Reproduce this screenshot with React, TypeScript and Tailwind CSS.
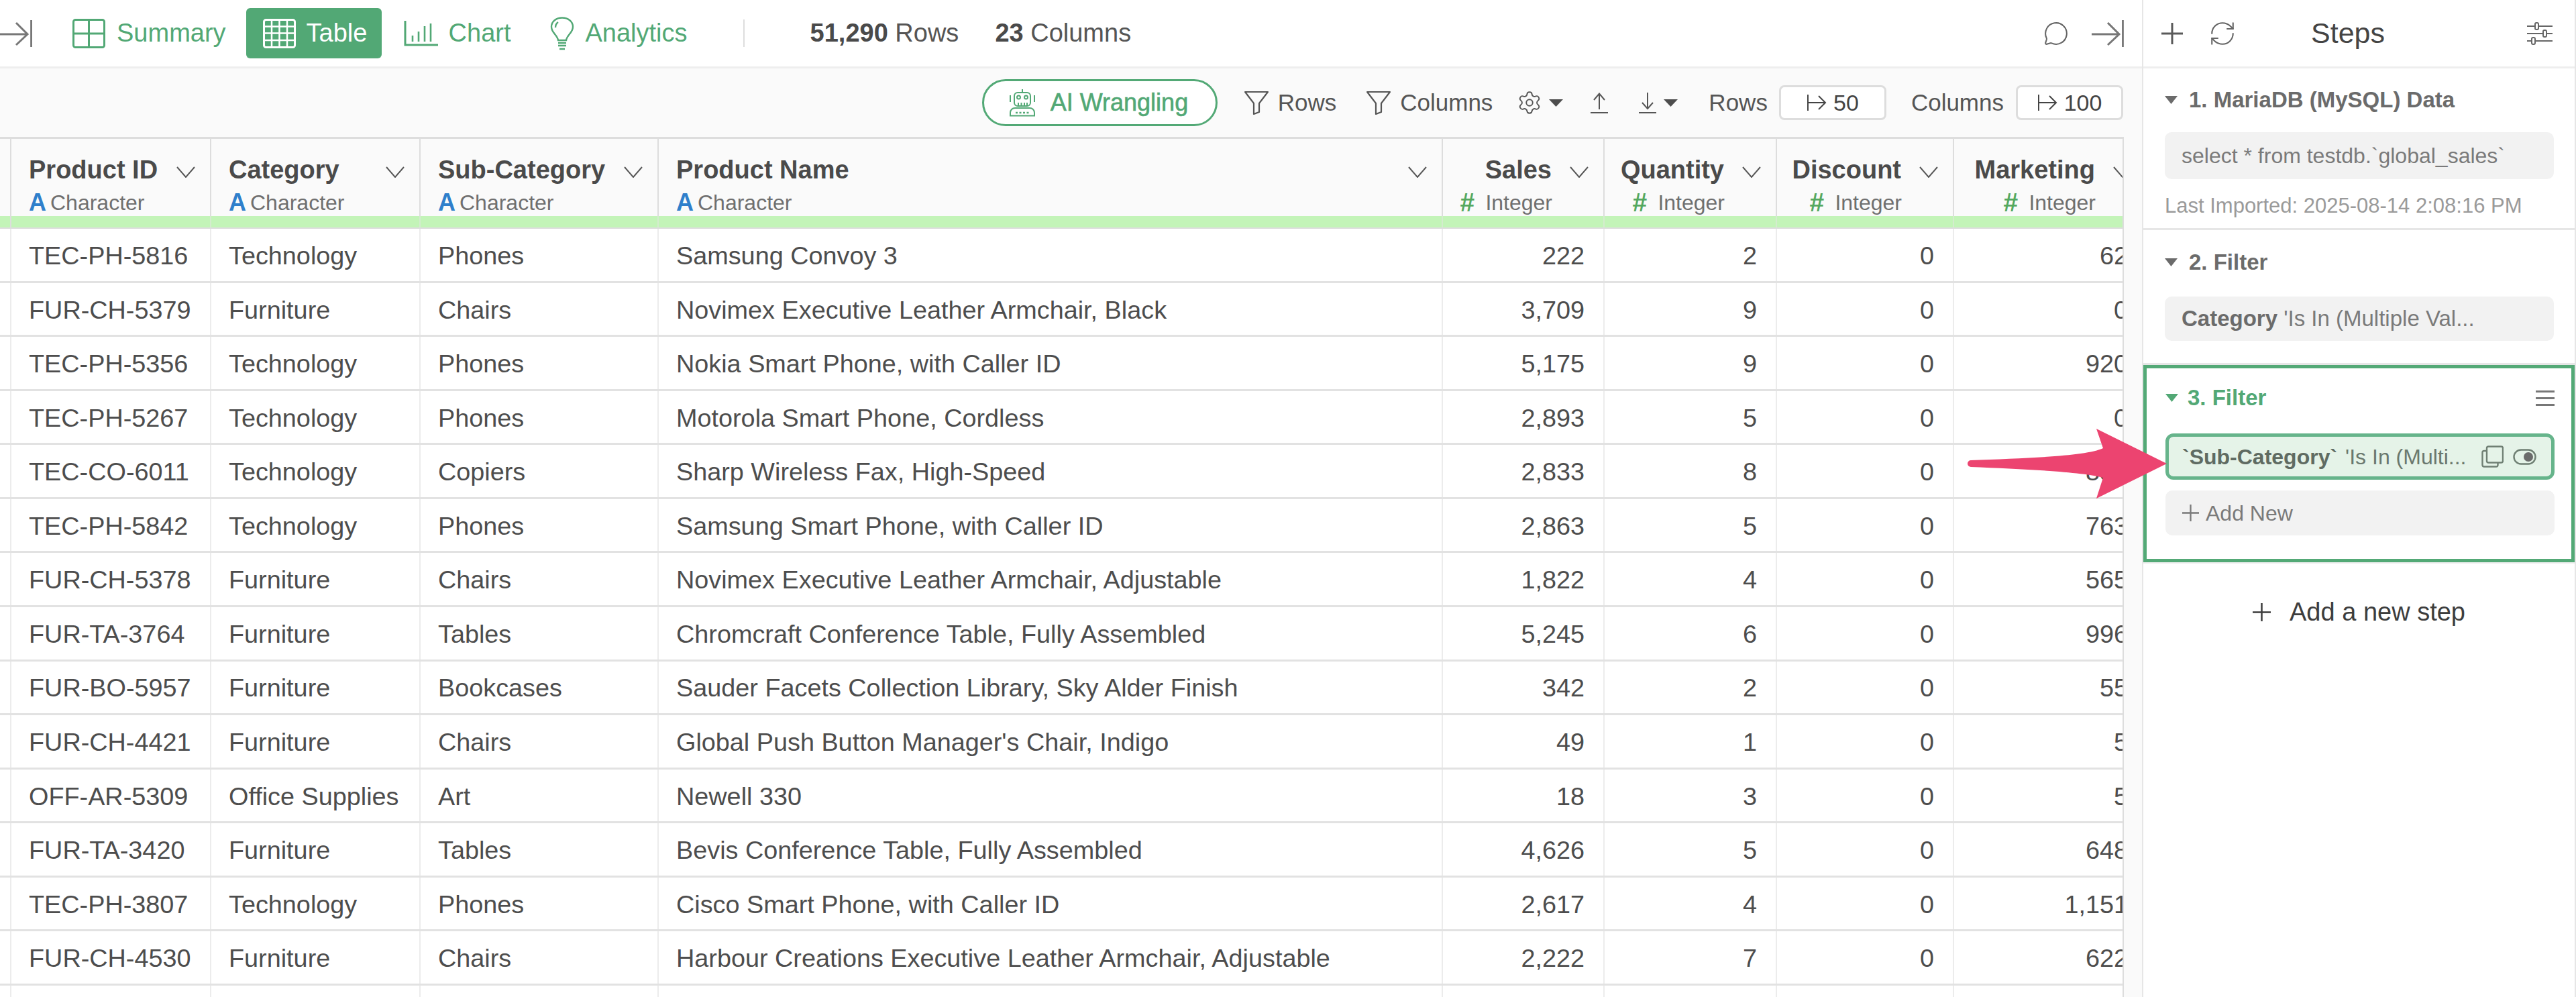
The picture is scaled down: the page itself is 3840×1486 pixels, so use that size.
import React from 'react';
import { MessageCircle, RefreshCw, Settings } from 'lucide-react';

const green = '#52a875';

const textCols = [
  { name: 'Product ID', width: 'w-[298px]' },
  { name: 'Category', width: 'w-[312px]' },
  { name: 'Sub-Category', width: 'w-[355px]' },
  { name: 'Product Name', width: 'w-[1169px]' },
];

const numCols = [
  { name: 'Sales', width: 'w-[241px]' },
  { name: 'Quantity', width: 'w-[257px]' },
  { name: 'Discount', width: 'w-[264px]' },
  { name: 'Marketing', width: 'w-[289px]' },
];

const rows = [
  ['TEC-PH-5816', 'Technology', 'Phones', 'Samsung Convoy 3', '222', '2', '0', '62'],
  ['FUR-CH-5379', 'Furniture', 'Chairs', 'Novimex Executive Leather Armchair, Black', '3,709', '9', '0', '0'],
  ['TEC-PH-5356', 'Technology', 'Phones', 'Nokia Smart Phone, with Caller ID', '5,175', '9', '0', '920'],
  ['TEC-PH-5267', 'Technology', 'Phones', 'Motorola Smart Phone, Cordless', '2,893', '5', '0', '0'],
  ['TEC-CO-6011', 'Technology', 'Copiers', 'Sharp Wireless Fax, High-Speed', '2,833', '8', '0', '850'],
  ['TEC-PH-5842', 'Technology', 'Phones', 'Samsung Smart Phone, with Caller ID', '2,863', '5', '0', '763'],
  ['FUR-CH-5378', 'Furniture', 'Chairs', 'Novimex Executive Leather Armchair, Adjustable', '1,822', '4', '0', '565'],
  ['FUR-TA-3764', 'Furniture', 'Tables', 'Chromcraft Conference Table, Fully Assembled', '5,245', '6', '0', '996'],
  ['FUR-BO-5957', 'Furniture', 'Bookcases', 'Sauder Facets Collection Library, Sky Alder Finish', '342', '2', '0', '55'],
  ['FUR-CH-4421', 'Furniture', 'Chairs', "Global Push Button Manager's Chair, Indigo", '49', '1', '0', '5'],
  ['OFF-AR-5309', 'Office Supplies', 'Art', 'Newell 330', '18', '3', '0', '5'],
  ['FUR-TA-3420', 'Furniture', 'Tables', 'Bevis Conference Table, Fully Assembled', '4,626', '5', '0', '648'],
  ['TEC-PH-3807', 'Technology', 'Phones', 'Cisco Smart Phone, with Caller ID', '2,617', '4', '0', '1,151'],
  ['FUR-CH-4530', 'Furniture', 'Chairs', 'Harbour Creations Executive Leather Armchair, Adjustable', '2,222', '7', '0', '622'],
  ['', '', '', '', '', '', '', ''],
];

const Chevron = () => (
  <svg width="28" height="17" viewBox="0 0 28 17" fill="none" stroke="#555555" strokeWidth="2" className="shrink-0 mt-[6px]">
    <path d="M1 1 L14 16 L27 1" />
  </svg>
);

const Caret = () => (
  <svg width="21" height="11" viewBox="0 0 21 11" fill="#4d4d4d" className="shrink-0">
    <path d="M0 0 H21 L10.5 11 Z" />
  </svg>
);

const StepCaret = ({ color = '#6b6b6b' }: { color?: string }) => (
  <svg width="19" height="12" viewBox="0 0 19 12" fill={color} className="shrink-0">
    <path d="M0 0 H19 L9.5 12 Z" />
  </svg>
);

const BarArrow = ({ className }: { className?: string }) => (
  <svg width="48" height="40" viewBox="0 0 48 40" fill="none" stroke="#777777" strokeWidth="3" className={className}>
    <path d="M0 21 H40 M24 4 L41 21 L24 37" />
    <path d="M46.5 0 V40" strokeWidth="2.5" stroke="#666666" />
  </svg>
);

const Funnel = () => (
  <svg width="36" height="36" viewBox="0 0 36 36" fill="none" stroke="#555555" strokeWidth="2.2" strokeLinejoin="round" className="shrink-0">
    <path d="M1 2 H35 L22 19 V32 L14 35 V19 Z" />
  </svg>
);

const Pipe = ({ className }: { className?: string }) => (
  <svg width="30" height="30" viewBox="0 0 30 30" fill="none" stroke="#444444" strokeWidth="2" className={className}>
    <path d="M2 3 V27 M2 15 H28 M18 5 L28 15 L18 25" />
  </svg>
);

const SummaryIcon = () => (
  <svg width="49" height="44" viewBox="0 0 49 44" fill="none" stroke={green} strokeWidth="3" className="shrink-0">
    <rect x="1.5" y="1.5" width="46" height="41" rx="3" />
    <path d="M24.5 1.5 V42.5 M1.5 22 H47.5" />
  </svg>
);

const TableIcon = () => (
  <svg width="49" height="44" viewBox="0 0 49 44" fill="none" stroke="#ffffff" strokeWidth="3" className="shrink-0">
    <rect x="1.5" y="1.5" width="46" height="41" rx="3" />
    <path d="M1.5 11.5 H47.5 M1.5 21.5 H47.5 M1.5 32 H47.5 M13 1.5 V42.5 M24.5 1.5 V42.5 M36 1.5 V42.5" strokeWidth="2.5" />
  </svg>
);

const ChartIcon = () => (
  <svg width="51" height="38" viewBox="0 0 51 38" fill="none" stroke={green} strokeWidth="2.6" className="shrink-0">
    <path d="M2 0 V36 H51" strokeWidth="3" />
    <path d="M13 22 V31 M22 16 V31 M31 8 V31 M40 4 V31" />
  </svg>
);

const BulbIcon = () => (
  <svg width="36" height="50" viewBox="0 0 36 50" fill="none" stroke={green} strokeWidth="2.4" className="shrink-0">
    <path d="M12 35 C11 27 2 24 2 15 C2 7 9 1.5 18 1.5 C27 1.5 34 7 34 15 C34 24 25 27 24 35 Z" />
    <path d="M12 8 C9 10 8 13 8 16" />
    <path d="M12 39 H24 M12 43 H24 M14 48 H22" />
  </svg>
);

const RobotIcon = () => (
  <svg width="38" height="41" viewBox="0 0 38 41" fill="none" stroke={green} strokeWidth="2" className="shrink-0">
    <path d="M19 0 V5" />
    <rect x="7" y="5" width="24" height="20" rx="5" />
    <circle cx="13.5" cy="12" r="2.5" />
    <circle cx="24.5" cy="12" r="2.5" />
    <path d="M13 20 V25 M17.5 20 V25 M22 20 V25 M26 20 V25 M1 9 V19 M37 9 V19" />
    <path d="M1 39.5 V35 C1 31 4 28 8 28 H30 C34 28 37 31 37 35 V39.5 Z" />
    <path d="M9 35 H29" strokeDasharray="3 2.5" strokeWidth="2.4" />
  </svg>
);

const UploadIcon = () => (
  <svg width="26" height="31" viewBox="0 0 26 31" fill="none" stroke="#555555" strokeWidth="2" className="shrink-0">
    <path d="M13 25 V1 M5 11 L13 1.5 L21 11 M0 30 H26" />
  </svg>
);

const DownloadIcon = () => (
  <svg width="26" height="31" viewBox="0 0 26 31" fill="none" stroke="#555555" strokeWidth="2" className="shrink-0">
    <path d="M13 0 V24 M5 15 L13 24 L21 15 M0 30 H26" />
  </svg>
);

const PlusIcon = ({ size, color = '#5a5a5a' }: { size: number; color?: string }) => (
  <svg width={size} height={size} viewBox="0 0 32 32" fill="none" stroke={color} strokeWidth="3" className="shrink-0">
    <path d="M16 0 V32 M0 16 H32" />
  </svg>
);

const SlidersIcon = () => (
  <svg width="38" height="34" viewBox="0 0 38 34" fill="#ffffff" stroke="#666666" strokeWidth="2" className="shrink-0 ml-auto">
    <path d="M0 6 H38 M0 17 H38 M0 28 H38" />
    <rect x="12" y="1" width="5" height="10" rx="2" />
    <rect x="24" y="12" width="5" height="10" rx="2" />
    <rect x="7" y="23" width="5" height="10" rx="2" />
  </svg>
);

const CopyIcon = () => (
  <svg width="33" height="33" viewBox="0 0 33 33" fill="none" stroke="#6f7f73" strokeWidth="2.4" className="shrink-0">
    <rect x="8" y="1.5" width="24" height="24" rx="2.5" />
    <path d="M8 8 H4 C2.5 8 1.5 9 1.5 10.5 V29 C1.5 30.5 2.5 31.5 4 31.5 H22 C23.5 31.5 24.5 30.5 24.5 29 V25.5" />
  </svg>
);

const ToggleIcon = () => (
  <svg width="35" height="24" viewBox="0 0 35 24" fill="none" stroke="#6f7f73" strokeWidth="2.4" className="shrink-0">
    <rect x="1.5" y="1.5" width="32" height="21" rx="10.5" />
    <circle cx="23" cy="12" r="7" fill="#6b6b6b" stroke="none" />
  </svg>
);

const TypeTag = ({ kind }: { kind: 'text' | 'num' }) =>
  kind === 'text' ? (
    <span className="flex items-center h-[40px]">
      <span className="font-bold text-[36px] text-[#2f7fcb] w-[32px]">A</span>
      <span className="text-[32px] text-[#6f6f6f]">Character</span>
    </span>
  ) : (
    <span className="flex items-center h-[40px]">
      <span className="font-bold text-[39px] text-[#55a85f] w-[38px]">#</span>
      <span className="text-[32px] text-[#6f6f6f]">Integer</span>
    </span>
  );

const Table = () => (
  <div className="flex-1 w-[3166px] overflow-hidden bg-white border-t-[3px] border-r-2 border-[#dddddd]">
    {/* header */}
    <div className="flex h-[115px] bg-[#fafafa]">
      <div className="w-[17px] shrink-0 border-r-2 border-[#dddddd]" />
      {textCols.map(c => (
        <div key={c.name} className={`${c.width} shrink-0 border-r-2 border-[#dddddd] pl-[26px] pr-[22px] pt-[24px]`}>
          <div className="flex items-center justify-between h-[44px]">
            <span className="font-bold text-[38px] text-[#4a4a4a] whitespace-nowrap">{c.name}</span>
            <Chevron />
          </div>
          <div className="mt-[7px]">
            <TypeTag kind="text" />
          </div>
        </div>
      ))}
      {numCols.map(c => (
        <div key={c.name} className={`${c.width} shrink-0 border-r-2 border-[#dddddd] pr-[22px] pt-[24px]`}>
          <div className="flex items-center justify-end gap-[27px] h-[44px]">
            <span className="font-bold text-[38px] text-[#4a4a4a] whitespace-nowrap">{c.name}</span>
            <Chevron />
          </div>
          <div className="flex justify-end pr-[54px] mt-[7px]">
            <TypeTag kind="num" />
          </div>
        </div>
      ))}
    </div>
    {/* green quality bar */}
    <div className="flex h-[19px] border-b-2 border-[#dddddd] bg-[#c3f4b8]">
      <div className="w-[17px] shrink-0 border-r-2 border-[#dddddd]" />
      {[...textCols, ...numCols].map(c => (
        <div key={c.name} className={`${c.width} shrink-0 border-r-2 border-[#d4ecce]`} />
      ))}
    </div>
    {/* body */}
    {rows.map((r, i) => (
      <div key={i} className="flex h-[80.57px] border-b-[3px] border-[#e2e2e2] text-[37.8px] text-[#4d4d4d]">
        <div className="w-[17px] shrink-0 border-r-2 border-[#ececec]" />
        {textCols.map((c, j) => (
          <div key={c.name} className={`${c.width} shrink-0 flex items-center border-r-2 border-[#ececec] pl-[26px] pt-[3px] whitespace-nowrap`}>
            {r[j]}
          </div>
        ))}
        {numCols.map((c, j) => (
          <div key={c.name} className={`${c.width} shrink-0 flex items-center justify-end border-r-2 border-[#ececec] pr-[28px] pt-[3px]`}>
            {r[j + 4]}
          </div>
        ))}
      </div>
    ))}
  </div>
);

const StepsPanel = () => (
  <div className="w-[647px] shrink-0 flex flex-col border-l-2 border-r-2 border-[#e6e6e6] bg-white">
    <div className="flex items-center h-[102px] border-b-[3px] border-[#eeeeee] pl-[27px] pr-[33px]">
      <PlusIcon size={32} />
      <RefreshCw size={42} strokeWidth={1.2} color="#666666" className="ml-[38px]" />
      <span className="ml-[111px] text-[43px] text-[#444444]">Steps</span>
      <SlidersIcon />
    </div>

    <div className="h-[241px] border-b-[3px] border-[#e6e6e6] pl-[32px] pr-[31px] pt-[27px]">
      <div className="flex items-center gap-[17px] h-[40px] font-bold text-[33px] text-[#6b6b6b]">
        <StepCaret />
        1. MariaDB (MySQL) Data
      </div>
      <div className="flex items-center h-[70px] mt-[28px] rounded-[10px] bg-[#f2f2f2] pl-[25px] text-[32px] text-[#7a7a7a]">
        select * from testdb.`global_sales`
      </div>
      <div className="flex items-center h-[32px] mt-[24px] text-[31px] text-[#9a9a9a]">
        Last Imported: 2025-08-14 2:08:16 PM
      </div>
    </div>

    <div className="h-[201px] border-b-[3px] border-[#e6e6e6] pl-[32px] pr-[31px] pt-[28px]">
      <div className="flex items-center gap-[17px] h-[40px] font-bold text-[33px] text-[#6b6b6b]">
        <StepCaret />
        2. Filter
      </div>
      <div className="flex items-center h-[66px] mt-[31px] rounded-[10px] bg-[#f2f2f2] pl-[25px] text-[33px] text-[#7a7a7a] whitespace-nowrap">
        <span className="font-bold text-[#6b6b6b]">Category</span>&nbsp;'Is In (Multiple Val...
      </div>
    </div>

    <div className="h-[294px] border-[5px] border-[#53a976] pl-[28px] pr-[25px] pt-[24px]">
      <div className="flex items-center h-[40px]">
        <StepCaret color={green} />
        <span className="ml-[14px] font-bold text-[33px] text-[#52a875]">3. Filter</span>
        <span className="ml-auto flex flex-col gap-[7px] w-[28px]">
          <span className="h-[3px] bg-[#777777]" />
          <span className="h-[3px] bg-[#777777]" />
          <span className="h-[3px] bg-[#777777]" />
        </span>
      </div>
      <div className="flex items-center h-[69px] mt-[33px] rounded-[12px] border-[5px] border-[#66b48b] bg-[#e5f3e8] pl-[20px] pr-[22px] text-[32px] text-[#6a786e] whitespace-nowrap">
        <span className="font-bold text-[#5f6b62]">`Sub-Category`</span>
        <span className="ml-[12px]">'Is In (Multi...</span>
        <span className="ml-auto flex items-center gap-[14px]">
          <CopyIcon />
          <ToggleIcon />
        </span>
      </div>
      <div className="flex items-center h-[67px] mt-[16px] rounded-[10px] bg-[#f2f2f2] pl-[25px] text-[32px] text-[#7a7a7a]">
        <PlusIcon size={25} color="#7a7a7a" />
        <span className="ml-[10px]">Add New</span>
      </div>
    </div>

    <div className="flex items-center justify-center gap-[28px] h-[147px] border-t-2 border-[#eeeeee] text-[38px] text-[#3d3d3d]">
      <PlusIcon size={27} color="#3d3d3d" />
      Add a new step
    </div>
  </div>
);

export default function App() {
  return (
    <div className="relative flex w-[3840px] h-[1486px] overflow-hidden bg-white font-['Liberation_Sans',sans-serif]">
      <div className="w-[3193px] shrink-0 flex flex-col bg-[#fafafa]">
        {/* top bar */}
        <div className="flex items-center h-[102px] shrink-0 border-b-[3px] border-[#eeeeee] bg-white pr-[27px] text-[38px]">
          <BarArrow />
          <div className="flex items-center gap-[17px] ml-[60px] text-[#52a875]">
            <SummaryIcon />
            Summary
          </div>
          <div className="flex items-center gap-[16px] ml-[30px] w-[202px] h-[75px] pl-[25px] rounded-[6px] bg-[#52a875] text-white">
            <TableIcon />
            Table
          </div>
          <div className="flex items-center gap-[16px] ml-[33px] text-[#52a875]">
            <ChartIcon />
            Chart
          </div>
          <div className="flex items-center gap-[17px] ml-[58px] text-[#52a875]">
            <BulbIcon />
            Analytics
          </div>
          <div className="w-[2px] h-[41px] ml-[83px] bg-[#dddddd]" />
          <div className="ml-[98px] text-[#555555]">
            <span className="font-bold text-[#4a4a4a]">51,290</span> Rows
          </div>
          <div className="ml-[54px] text-[#555555]">
            <span className="font-bold text-[#4a4a4a]">23</span> Columns
          </div>
          <MessageCircle size={38} strokeWidth={1.3} color="#666666" className="ml-auto" />
          <BarArrow className="ml-[34px]" />
        </div>

        {/* toolbar */}
        <div className="flex items-center justify-end h-[102px] shrink-0 pr-[28px] text-[35px] text-[#555555]">
          <div className="flex items-center gap-[23px] w-[351px] h-[70px] pl-[38px] rounded-[36px] border-[3px] border-[#53a976] bg-white text-[36px] text-[#52a875] [-webkit-text-stroke:0.6px_#52a875]">
            <RobotIcon />
            AI Wrangling
          </div>
          <div className="flex items-center gap-[14px] ml-[40px]">
            <Funnel />
            Rows
          </div>
          <div className="flex items-center gap-[14px] ml-[45px]">
            <Funnel />
            Columns
          </div>
          <Settings size={38} strokeWidth={1.2} color="#555555" className="ml-[36px]" />
          <div className="ml-[10px]">
            <Caret />
          </div>
          <div className="ml-[41px]">
            <UploadIcon />
          </div>
          <div className="ml-[46px]">
            <DownloadIcon />
          </div>
          <div className="ml-[11px]">
            <Caret />
          </div>
          <span className="ml-[46px]">Rows</span>
          <div className="flex items-center justify-center w-[160px] h-[52px] ml-[17px] rounded-[8px] border-[3px] border-[#dddddd] bg-white text-[34px] text-[#444444]">
            <Pipe />
            <span className="ml-[10px]">50</span>
          </div>
          <span className="ml-[37px]">Columns</span>
          <div className="flex items-center justify-center w-[160px] h-[52px] ml-[18px] rounded-[8px] border-[3px] border-[#dddddd] bg-white text-[34px] text-[#444444]">
            <Pipe />
            <span className="ml-[10px]">100</span>
          </div>
        </div>

        <Table />
      </div>

      <StepsPanel />

      {/* pink annotation arrow */}
      <svg width="320" height="120" viewBox="2925 635 320 120" className="absolute left-[2925px] top-[635px]">
        <path
          d="M2938 686 C3020 683 3110 680 3135 668 L3125 639 L3230 691 L3125 743 L3135 712 C3110 704 3020 699 2938 696 A5 5 0 0 1 2938 686 Z"
          fill="#ec4470"
        />
      </svg>
    </div>
  );
}
